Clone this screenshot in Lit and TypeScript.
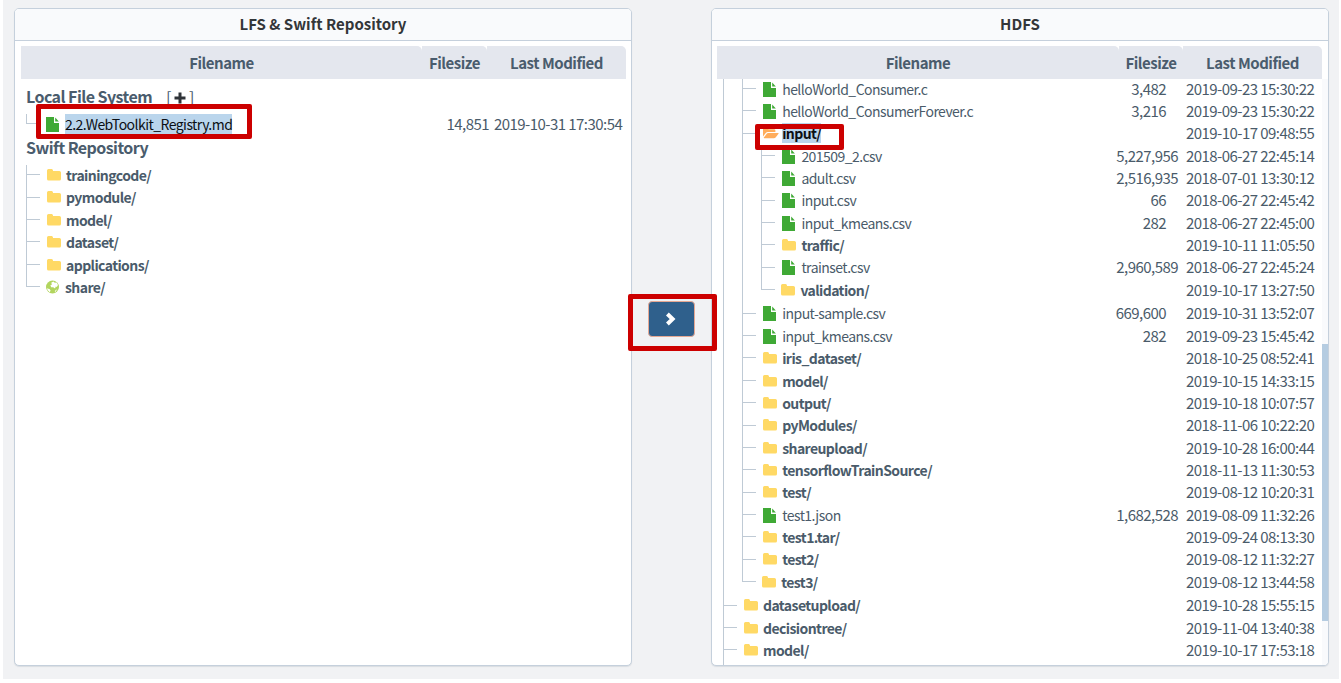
import { LitElement, html, css, svg, nothing } from "lit";
import { customElement, property } from "lit/decorators.js";
import { classMap } from "lit/directives/class-map.js";

type Kind = "file" | "folder" | "open" | "share";

interface Entry {
  name: string;
  kind: Kind;
  depth: number;
  size?: string;
  date?: string;
  last?: boolean;
  selected?: boolean;
}

const entry = (depth: number, kind: Kind, name: string, date = "", size = "", extra: Partial<Entry> = {}): Entry => ({
  depth, kind, name, date, size, ...extra,
});

const LAST = { last: true };

const LOCAL: Entry[] = [
  entry(0, "file", "2.2.WebToolkit_Registry.md", "2019-10-31 17:30:54", "14,851", { last: true, selected: true }),
];

const SWIFT: Entry[] = [
  entry(0, "folder", "trainingcode/"),
  entry(0, "folder", "pymodule/"),
  entry(0, "folder", "model/"),
  entry(0, "folder", "dataset/"),
  entry(0, "folder", "applications/"),
  entry(0, "share", "share/", "", "", LAST),
];

const HDFS: Entry[] = [
  entry(1, "file", "helloWorld_Consumer.c", "2019-09-23 15:30:22", "3,482"),
  entry(1, "file", "helloWorld_ConsumerForever.c", "2019-09-23 15:30:22", "3,216"),
  entry(1, "open", "input/", "2019-10-17 09:48:55", "", { selected: true }),
  entry(2, "file", "201509_2.csv", "2018-06-27 22:45:14", "5,227,956"),
  entry(2, "file", "adult.csv", "2018-07-01 13:30:12", "2,516,935"),
  entry(2, "file", "input.csv", "2018-06-27 22:45:42", "66"),
  entry(2, "file", "input_kmeans.csv", "2018-06-27 22:45:00", "282"),
  entry(2, "folder", "traffic/", "2019-10-11 11:05:50"),
  entry(2, "file", "trainset.csv", "2018-06-27 22:45:24", "2,960,589"),
  entry(2, "folder", "validation/", "2019-10-17 13:27:50", "", LAST),
  entry(1, "file", "input-sample.csv", "2019-10-31 13:52:07", "669,600"),
  entry(1, "file", "input_kmeans.csv", "2019-09-23 15:45:42", "282"),
  entry(1, "folder", "iris_dataset/", "2018-10-25 08:52:41"),
  entry(1, "folder", "model/", "2019-10-15 14:33:15"),
  entry(1, "folder", "output/", "2019-10-18 10:07:57"),
  entry(1, "folder", "pyModules/", "2018-11-06 10:22:20"),
  entry(1, "folder", "shareupload/", "2019-10-28 16:00:44"),
  entry(1, "folder", "tensorflowTrainSource/", "2018-11-13 11:30:53"),
  entry(1, "folder", "test/", "2019-08-12 10:20:31"),
  entry(1, "file", "test1.json", "2019-08-09 11:32:26", "1,682,528"),
  entry(1, "folder", "test1.tar/", "2019-09-24 08:13:30"),
  entry(1, "folder", "test2/", "2019-08-12 11:32:27"),
  entry(1, "folder", "test3/", "2019-08-12 13:44:58", "", LAST),
  entry(0, "folder", "datasetupload/", "2019-10-28 15:55:15"),
  entry(0, "folder", "decisiontree/", "2019-11-04 13:40:38"),
  entry(0, "folder", "model/", "2019-10-17 17:53:18"),
];

const ICONS = {
  file: svg`<path fill="#3fa935" d="M0 0H8V6H13V15H0Z"/><path fill="#3fa935" d="M9.2 0.4L12.8 4.6H9.2Z"/>`,
  folder: svg`<path fill="#ffd965" d="M0 2.6Q0 1.1 1.5 1.1H4.6Q6 1.1 6 2.6V3H12.4Q14 3 14 4.6V11Q14 12.6 12.4 12.6H1.6Q0 12.6 0 11Z"/>`,
  open: svg`<path fill="#ffad5c" d="M0 10.4V3.2Q0 2 1.2 2H4.4Q5.5 2 5.5 3.2H11Q12.4 3.2 12.4 4.6V6H4.8Q3.6 6 2.8 7Z"/><path fill="#ffad5c" d="M5 7H15.2Q16 7 15.5 7.8L12.6 11.6Q12 12.3 11 12.3H1.2Q0.3 12.3 0.9 11.5L3.7 7.8Q4.3 7 5 7Z"/>`,
  share: svg`<circle cx="6.5" cy="7" r="6.5" fill="#b2d55e"/><path fill="#fff" d="M5.2 2.8L7.4 1.6L8.8 2.7L10.6 2.4L12 5L10.8 7L9.8 6.5L9 8.4L7.2 7.2L5.2 7.2L4.4 5.2L6 4.6ZM1 8.2L3.8 9.2L4.6 10.8L3.6 12.2Q1.2 10.6 1 8.2ZM9.6 10L11 9.6L9.6 11.8L8.6 12.2Z"/>`,
};

@customElement("tree-row")
class TreeRow extends LitElement {
  @property({ attribute: false }) item!: Entry;

  static styles = css`
    :host { display: block; }
    .row { display: flex; height: 22.36px; color: #4a5b6a; font-size: 14px; line-height: 20px; }
    .row.last { height: 23.6px; }
    .guide { flex: none; width: 18px; margin-right: 0.2px; border-left: 1px solid #bfcad5; }
    .joint { flex: none; width: 14px; display: flex; flex-direction: column; }
    .up { height: 9.3px; width: 13px; border-left: 1px solid #bfcad5; border-bottom: 1px solid #bfcad5; }
    .down { flex: 1; width: 0; border-left: 1px solid #bfcad5; }
    .last .down { border-color: transparent; }
    svg { flex: none; display: block; width: 17px; height: 15px; margin: 3px 0 0 7px; overflow: visible; }
    .last svg { margin-left: 6px; }
    .name { flex: 1; white-space: nowrap; padding-left: 2px; letter-spacing: -0.54px; }
    .label { display: inline-block; height: 20px; line-height: 20px; }
    .strong { font-weight: 700; letter-spacing: -0.58px; }
    .selected { background: #bad5ec; color: #0c0f14; }
    .size, .date { flex: none; font-size: 15px; letter-spacing: -0.55px; white-space: nowrap; }
    .size { padding-right: 20px; }
    .size.wide { padding-right: 8px; }
    .size.near { padding-right: 5px; }
    .date { width: 130px; }
  `;

  render() {
    const { name, kind, depth, size, date, last, selected } = this.item;
    const labelClasses = { label: true, strong: kind !== "file", selected: !!selected };
    const sizeClasses = { size: true, wide: (size ?? "").length > 8, near: depth === 0 };
    return html`<div class=${classMap({ row: true, last: !!last })}>
      ${Array.from({ length: depth }, () => html`<span class="guide"></span>`)}
      <span class="joint"><span class="up"></span><span class="down"></span></span>
      <svg viewBox="0 0 17 15">${ICONS[kind]}</svg>
      <span class="name"><span class=${classMap(labelClasses)}>${name}</span></span>
      ${size ? html`<span class=${classMap(sizeClasses)}>${size}</span>` : nothing}
      ${date ? html`<span class="date">${date}</span>` : nothing}
    </div>`;
  }
}

@customElement("app-root")
class AppRoot extends LitElement {
  static styles = css`
    :host {
      display: block; width: 1341px; height: 683px; overflow: hidden; background: #fff;
      font-family: "Noto Sans CJK KR", "Noto Sans", sans-serif;
    }
    .page {
      position: relative; box-sizing: border-box; width: 1336px; height: 679px; margin-left: 3px;
      padding: 8px 10px 13px 11px; background: #f1f2f4; display: grid; grid-template-columns: 618px 79px 618px;
    }
    .panel {
      box-sizing: border-box; height: 658px; border: 1px solid #c5d0dc; border-radius: 5px; background: #fff;
      overflow: hidden; display: flex; flex-direction: column; box-shadow: 0 1px 1px #d9dde2;
    }
    .title {
      flex: none; height: 31px; border-bottom: 1px solid #c5d0dc; background: #f9fafc; color: #333639;
      font-size: 15px; font-weight: 700; line-height: 29px; text-align: center;
    }
    .heads { flex: none; display: grid; grid-template-columns: 401px 65px 139px; margin: 5px 0 0 6px; height: 33px; }
    .right .heads { margin-left: 5px; grid-template-columns: 402px 64px 139px; }
    .head {
      background: #e4e7ee; border-top-right-radius: 5px; color: #4a5c6d; font-size: 15px; font-weight: 700;
      line-height: 33px; text-align: center; letter-spacing: -0.48px; white-space: nowrap;
    }
    .tree { padding: 8px 7px 0 11px; }
    .root { height: 23px; color: #4a5c6d; font-size: 16px; font-weight: 700; line-height: 19px; letter-spacing: -0.55px; display: flex; }
    .root.second { height: 22px; margin-top: 1.4px; }
    .add { display: flex; align-items: center; height: 21px; margin-left: 14px; font-weight: 400; }
    .add svg { margin: 0 3px; }
    .local { padding-top: 3.5px; }
    .swift { padding-top: 4.6px; }
    .viewport { flex: 1; display: flex; overflow: hidden; }
    .files { flex: 1; margin-top: -0.4px; padding: 0 6px 0 11px; display: flex; flex-direction: column; }
    .stem { flex: 1; border-left: 1px solid #bfcad5; }
    .bar { width: 6px; background: #f9fafc; padding-top: 265px; }
    .thumb { height: 277px; background: #b5cce1; }
    .middle { padding: 293px 0 0 16px; }
    .move {
      box-sizing: border-box; width: 47px; height: 36px; padding: 0; border: 1px solid #e5a893; border-radius: 4px; background: #2f608c;
      display: flex; align-items: center; justify-content: center;
    }
    .move svg { margin: 0 1px 1px 0; }
    .mark { position: absolute; box-sizing: border-box; border: 5px solid #cc0000; border-radius: 2px; }
    .mark.source { left: 33px; top: 104px; width: 216px; height: 35px; }
    .mark.target { left: 752px; top: 124px; width: 89px; height: 26px; }
    .mark.transfer { left: 625px; top: 294px; width: 89px; height: 57px; }
  `;

  private heads() {
    return html`<div class="heads">
      <div class="head">Filename</div><div class="head">Filesize</div><div class="head">Last Modified</div>
    </div>`;
  }

  private rows(items: Entry[]) {
    return items.map((item) => html`<tree-row .item=${item}></tree-row>`);
  }

  render() {
    return html`<div class="page">
      <section class="panel">
        <div class="title">LFS &amp; Swift Repository</div>
        ${this.heads()}
        <div class="tree">
          <div class="root">Local File System
            <span class="add">[<svg width="12" height="12" viewBox="0 0 12 12"><path d="M6 0.5V11.5M0.5 6H11.5" stroke="#2f3338" stroke-width="3" /></svg>]</span>
          </div>
          <div class="local">${this.rows(LOCAL)}</div>
          <div class="root second">Swift Repository</div>
          <div class="swift">${this.rows(SWIFT)}</div>
        </div>
      </section>
      <div class="middle">
        <button class="move" aria-label="Copy">
          <svg width="12" height="16" viewBox="0 0 12 16"><path d="M2.4 3L7.6 8L2.4 13" fill="none" stroke="#fff" stroke-width="4" /></svg>
        </button>
      </div>
      <section class="panel right">
        <div class="title">HDFS</div>
        ${this.heads()}
        <div class="viewport">
          <div class="files">${this.rows(HDFS)}<div class="stem"></div></div>
          <div class="bar"><div class="thumb"></div></div>
        </div>
      </section>
      <div class="mark source"></div>
      <div class="mark target"></div>
      <div class="mark transfer"></div>
    </div>`;
  }
}
